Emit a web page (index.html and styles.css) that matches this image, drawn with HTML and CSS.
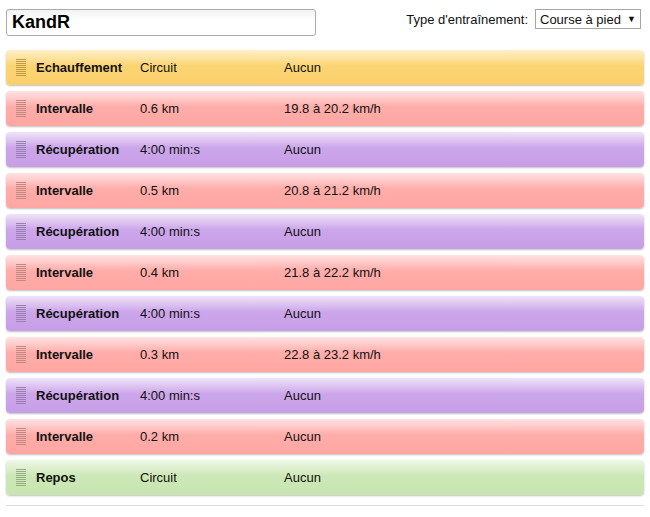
FILE: index.html
```html
<!DOCTYPE html>
<html lang="fr">
<head>
    <meta charset="UTF-8">
    <title>KandR</title>
    <link rel="stylesheet" href="styles.css">
</head>
<body>
    <div class="page">
        <!-- Header -->
        <div class="header">
            <input class="title-input" type="text" value="KandR">
            <div class="type-box">
                <label for="type">Type d'entraînement:</label>
                <div class="select-box" id="type">Course à pied <span class="arrow">&#9660;</span></div>
            </div>
        </div>

        <!-- Steps -->
        <div class="steps">
            <div class="step warmup"><span class="grip"></span><span class="name">Echauffement</span><span class="dur">Circuit</span><span class="target">Aucun</span></div>
            <div class="step interval"><span class="grip"></span><span class="name">Intervalle</span><span class="dur">0.6 km</span><span class="target">19.8 à 20.2 km/h</span></div>
            <div class="step recovery"><span class="grip"></span><span class="name">Récupération</span><span class="dur">4:00 min:s</span><span class="target">Aucun</span></div>
            <div class="step interval"><span class="grip"></span><span class="name">Intervalle</span><span class="dur">0.5 km</span><span class="target">20.8 à 21.2 km/h</span></div>
            <div class="step recovery"><span class="grip"></span><span class="name">Récupération</span><span class="dur">4:00 min:s</span><span class="target">Aucun</span></div>
            <div class="step interval"><span class="grip"></span><span class="name">Intervalle</span><span class="dur">0.4 km</span><span class="target">21.8 à 22.2 km/h</span></div>
            <div class="step recovery"><span class="grip"></span><span class="name">Récupération</span><span class="dur">4:00 min:s</span><span class="target">Aucun</span></div>
            <div class="step interval"><span class="grip"></span><span class="name">Intervalle</span><span class="dur">0.3 km</span><span class="target">22.8 à 23.2 km/h</span></div>
            <div class="step recovery"><span class="grip"></span><span class="name">Récupération</span><span class="dur">4:00 min:s</span><span class="target">Aucun</span></div>
            <div class="step interval"><span class="grip"></span><span class="name">Intervalle</span><span class="dur">0.2 km</span><span class="target">Aucun</span></div>
            <div class="step rest"><span class="grip"></span><span class="name">Repos</span><span class="dur">Circuit</span><span class="target">Aucun</span></div>
        </div>

        <div class="footer-line"></div>
    </div>
</body>
</html>
```

FILE: styles.css
```css
body {
    margin: 0;
    background-color: #fff;
    font-family: "Liberation Sans", Arial, sans-serif;
    font-size: 13px;
    color: #111;
}

.page {
    padding: 9px 6px 0 6px;
}

.header {
    display: flex;
    align-items: flex-start;
    justify-content: space-between;
    height: 41px;
}

.title-input {
    box-sizing: border-box;
    width: 310px;
    height: 27px;
    margin: 0;
    padding: 0 5px;
    border: 1px solid #aaa;
    border-radius: 3px;
    background: linear-gradient(to bottom, #f2f2f2, #fff 40%);
    font-family: "Liberation Sans", Arial, sans-serif;
    font-size: 18px;
    font-weight: bold;
    color: #000;
}

.type-box {
    display: flex;
    align-items: center;
    gap: 7px;
    margin-right: 3px;
}

.select-box {
    box-sizing: border-box;
    height: 20px;
    width: 106px;
    padding: 0 4px;
    border: 1px solid #a5a5a5;
    display: flex;
    align-items: center;
    justify-content: space-between;
    font-size: 13px;
}

.arrow {
    font-size: 9px;
}

.steps {
    display: flex;
    flex-direction: column;
    gap: 6px;
}

.step {
    height: 35px;
    border-radius: 4px;
    box-shadow: 0 1px 2px rgba(0, 0, 0, 0.25);
    display: flex;
    align-items: center;
    padding-left: 10px;
}

.grip {
    width: 10px;
    height: 17px;
    margin-right: 10px;
    background: repeating-linear-gradient(to bottom, currentColor 0, currentColor 1px, transparent 1px, transparent 2px);
}

.name {
    width: 104px;
    font-weight: bold;
}

.dur {
    width: 144px;
}

.warmup {
    background: linear-gradient(to bottom, #fff0cc 0%, #fbd573 45%, #fbd06c 100%);
}
.warmup .grip { color: #c29c45; }

.interval {
    background: linear-gradient(to bottom, #ffe3e3 0%, #ffadaa 45%, #ffa6a2 100%);
}
.interval .grip { color: #c28885; }

.recovery {
    background: linear-gradient(to bottom, #efe4f8 0%, #cca6ea 45%, #c69ee7 100%);
}
.recovery .grip { color: #9a80b0; }

.rest {
    background: linear-gradient(to bottom, #eef7e8 0%, #cde8b7 45%, #c8e5b0 100%);
}
.rest .grip { color: #98ac86; }

.footer-line {
    margin-top: 10px;
    border-top: 1px solid #ddd;
}
```
